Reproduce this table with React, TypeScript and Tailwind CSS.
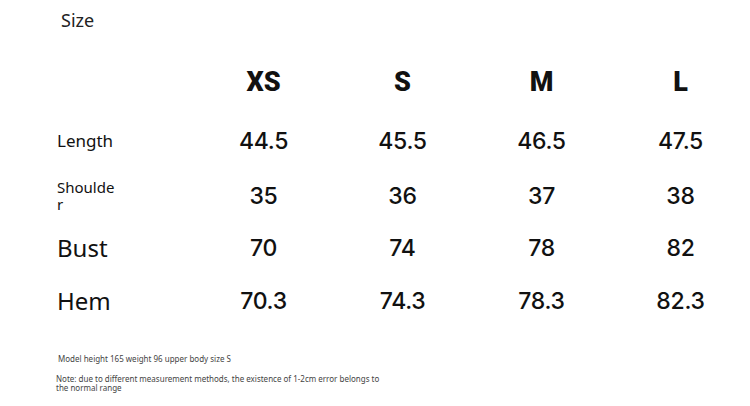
import React from "react";

const sizes = ["XS", "S", "M", "L"];

const rows = [
  { label: "Length", values: ["44.5", "45.5", "46.5", "47.5"], h: "h-[66px]", text: "text-[17px]" },
  { label: "Shoulder", values: ["35", "36", "37", "38"], h: "h-[44px]", text: "text-[15px] leading-[17px] w-[58px] break-all" },
  { label: "Bust", values: ["70", "74", "78", "82"], h: "h-[60px]", text: "text-[24px]" },
  { label: "Hem", values: ["70.3", "74.3", "78.3", "82.3"], h: "h-[46px]", text: "text-[24px]" },
];

const App = () => {
  return (
    <div className="w-[750px] h-[406px] bg-white overflow-hidden font-['Noto_Sans',sans-serif] text-[#111]">
      <div className="pl-[61px] pt-[7px] h-[56px] text-[18px] text-[#222]">Size</div>

      <div className="pl-[57px]">
        <div className="grid grid-cols-[137px_repeat(4,139px)] h-[52px] items-center">
          <div />
          {sizes.map((s) => (
            <div key={s} className="text-center font-['Roboto',sans-serif] font-black text-[27px]">
              {s}
            </div>
          ))}
        </div>

        {rows.map((row) => (
          <div key={row.label} className={`grid grid-cols-[137px_repeat(4,139px)] items-center ${row.h}`}>
            <div className={row.text}>{row.label}</div>
            {row.values.map((v, i) => (
              <div key={i} className="text-center font-['Inter',sans-serif] font-medium text-[23px] tracking-[-0.3px]">
                {v}
              </div>
            ))}
          </div>
        ))}
      </div>

      <div className="pl-[58px] pt-[30px] text-[8px] text-[#444] leading-[10px]">
        Model height 165 weight 96 upper body size S
      </div>
      <div className="pl-[56px] pt-[10px] w-[390px] text-[8px] text-[#444] leading-[9px]">
        Note: due to different measurement methods, the existence of 1-2cm error belongs to the normal range
      </div>
    </div>
  );
};

export default App;
